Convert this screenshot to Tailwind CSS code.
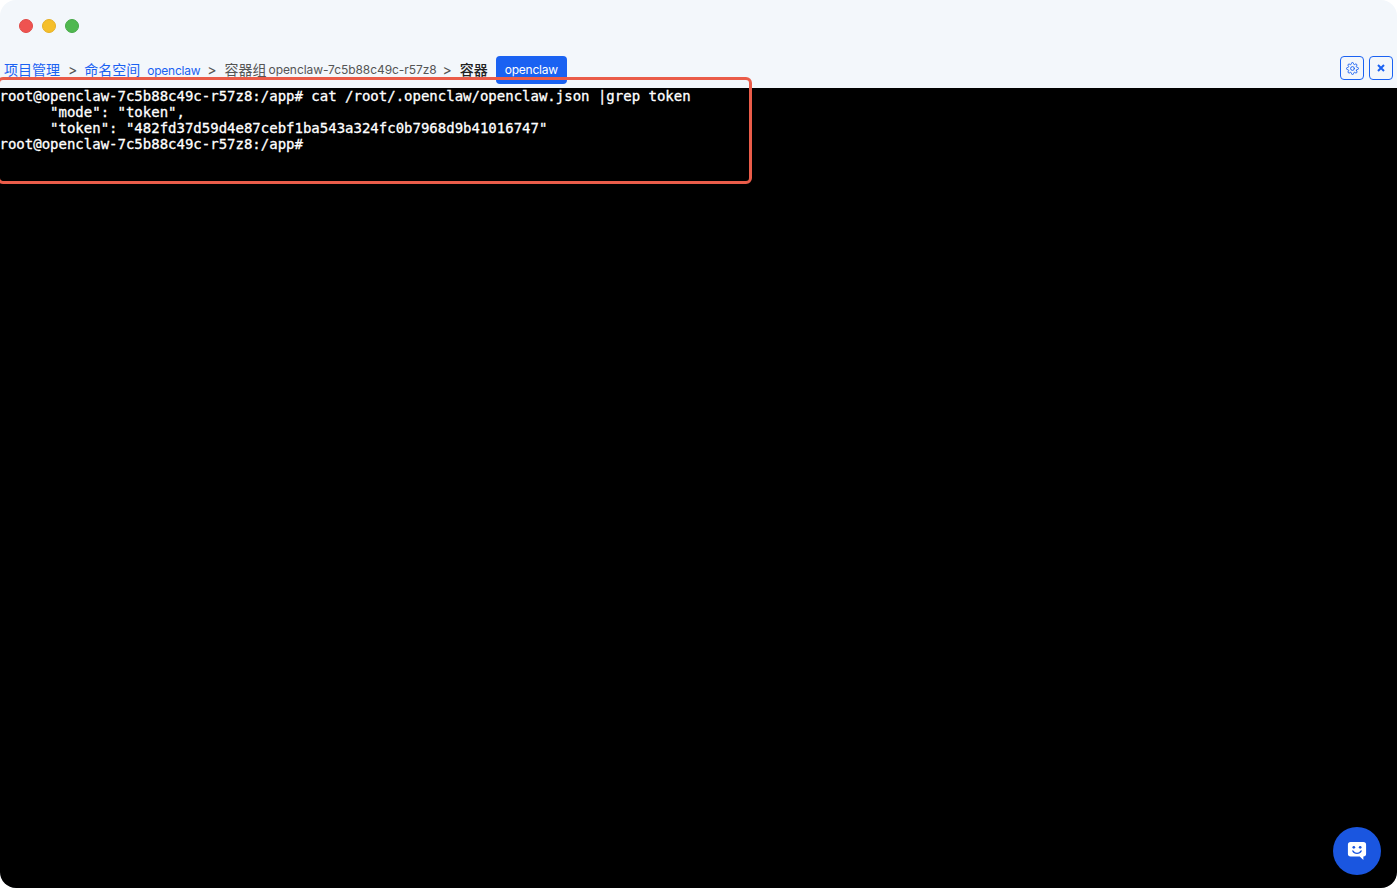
<!DOCTYPE html>
<html lang="en">
<head>
    <meta charset="utf-8"/>
    <title>openclaw</title>
    <script src="https://cdn.jsdelivr.net/npm/@tailwindcss/browser@4"></script>
</head>
<body class="bg-white overflow-hidden font-['Inter','Noto_Sans_CJK_SC',sans-serif]">
<div class="relative w-[1397px] h-[888px] flex flex-col rounded-[16px] overflow-hidden bg-[#f3f7fb]">
    <!-- Window buttons -->
    <div class="h-[52px] shrink-0 flex items-center gap-[9px] pl-[19px]">
        <span class="w-[14px] h-[14px] rounded-full bg-[#ef5350] border border-[#e04a46]"></span>
        <span class="w-[14px] h-[14px] rounded-full bg-[#f5bf2a] border border-[#e6b025]"></span>
        <span class="w-[14px] h-[14px] rounded-full bg-[#4fb84f] border border-[#46a947]"></span>
    </div>
    <!-- Breadcrumb -->
    <div class="h-[36px] shrink-0 flex items-start justify-between pr-[4px]">
        <div class="flex items-center h-[28px] mt-[4px] pl-[4px] text-[14px] whitespace-nowrap">
            <a class="text-[#1a62f2] relative top-[-1px]">项目管理</a>
            <span class="text-[#555] ml-[8px] mr-[7px] relative top-[-1px]">&gt;</span>
            <a class="text-[#1a62f2] relative top-[-1px]">命名空间</a>
            <a class="text-[#1a62f2] text-[12px] ml-[7px] w-[52px] tracking-[-0.25px] relative top-[1px]">openclaw</a>
            <span class="text-[#555] ml-[8px] mr-[8px] relative top-[-1px]">&gt;</span>
            <span class="text-[#555] relative top-[-1px]">容器组</span>
            <span class="text-[#555] text-[12px] ml-[2px] w-[167px] tracking-[-0.07px]">openclaw-7c5b88c49c-r57z8</span>
            <span class="text-[#555] ml-[7px] mr-[8px] relative top-[-1px]">&gt;</span>
            <span class="text-[#222] font-medium relative top-[-1px]">容器</span>
            <span class="ml-[8px] h-[28px] w-[71px] flex items-center justify-center rounded-[4px] bg-[#1a62f2] text-white text-[12px] tracking-[-0.25px]">openclaw</span>
        </div>
        <div class="flex gap-[5px] mt-[4px]">
            <button class="w-[24px] h-[24px] flex items-center justify-center rounded-[4px] border border-[#1a62f2] text-[#1a62f2]">
                <svg class="w-[13px] h-[13px]" viewBox="0 0 24 24" fill="none" stroke="currentColor" stroke-width="1.800" stroke-linecap="round" stroke-linejoin="round"><circle cx="12" cy="12" r="3.500"/><path d="M19.4 15a1.65 1.65 0 0 0 .33 1.82l.06.06a2 2 0 1 1-2.83 2.83l-.06-.06a1.65 1.65 0 0 0-2.82 1.17V21a2 2 0 1 1-4 0v-.09A1.65 1.65 0 0 0 7.2 19.74l-.06.06a2 2 0 1 1-2.83-2.83l.06-.06A1.65 1.65 0 0 0 3.2 14.1H3a2 2 0 1 1 0-4h.09A1.65 1.65 0 0 0 4.26 7.2l-.06-.06a2 2 0 1 1 2.83-2.83l.06.06A1.65 1.65 0 0 0 9.9 3.2V3a2 2 0 1 1 4 0v.09a1.65 1.65 0 0 0 2.8 1.17l.06-.06a2 2 0 1 1 2.83 2.83l-.06.06A1.65 1.65 0 0 0 20.8 9.9H21a2 2 0 1 1 0 4h-.09a1.65 1.65 0 0 0-1.51 1.1z"/></svg>
            </button>
            <button class="w-[24px] h-[24px] flex items-center justify-center rounded-[4px] border border-[#1a62f2] text-[#1a62f2]">
                <svg class="w-[10px] h-[10px]" viewBox="0 0 10 10" fill="none" stroke="currentColor" stroke-width="2"><path d="M2 2l6 6M8 2l-6 6"/></svg>
            </button>
        </div>
    </div>
    <!-- Terminal -->
    <pre class="flex-1 bg-black text-white text-[14px] leading-[16px] [-webkit-text-stroke:0.3px_white] font-['DejaVu_Sans_Mono',monospace]"><code class="block ml-[-0.5px] font-['DejaVu_Sans_Mono',monospace]">root@openclaw-7c5b88c49c-r57z8:/app# cat /root/.openclaw/openclaw.json |grep token
      "mode": "token",
      "token": "482fd37d59d4e87cebf1ba543a324fc0b7968d9b41016747"
root@openclaw-7c5b88c49c-r57z8:/app#</code></pre>
    <!-- Annotation box -->
    <div class="absolute left-[-3px] top-[77px] w-[755px] h-[107px] border-[3px] border-[#ea5c49] rounded-[6px]"></div>
    <!-- Chat button -->
    <button class="absolute left-[1333px] top-[827px] w-[48px] h-[48px] rounded-full bg-[#1a56e0] flex items-center justify-center">
        <svg class="w-[20px] h-[20px]" viewBox="0 0 22 22"><path fill="#fff" d="M4 1h14a3 3 0 0 1 3 3v10a3 3 0 0 1-3 3v4l-4-4H4a3 3 0 0 1-3-3V4a3 3 0 0 1 3-3z"/><circle cx="7.500" cy="7" r="1.500" fill="#1a56e0"/><circle cx="14.500" cy="7" r="1.500" fill="#1a56e0"/><path d="M6.500 11c1 2 2.600 2.600 4.500 2.600s3.500-.6 4.500-2.600" fill="none" stroke="#1a56e0" stroke-width="1.600" stroke-linecap="round"/></svg>
    </button>
</div>
</body>
</html>
